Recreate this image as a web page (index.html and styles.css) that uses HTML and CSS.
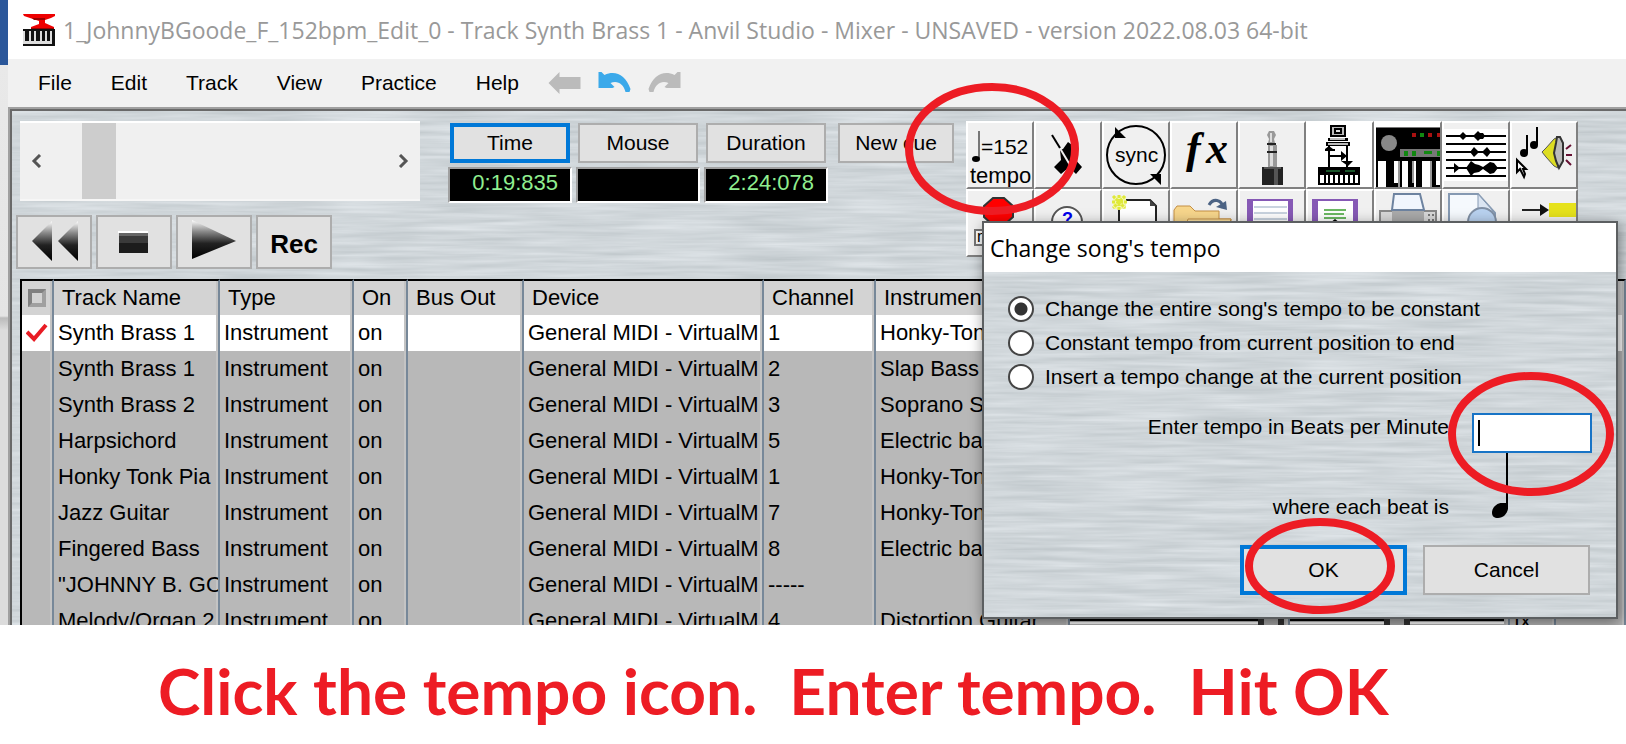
FILE: index.html
```html
<!DOCTYPE html>
<html lang="en">

<head>
    <meta charset="UTF-8">
    <meta name="viewport" content="width=device-width, initial-scale=1.0">
    <title>Anvil Studio - Change tempo</title>
    <link rel="stylesheet" href="styles.css">
</head>

<body>
    <main class="stage">
        <div class="window">
            <header class="title-bar">
                <svg class="app-icon" viewBox="0 0 32 32" aria-hidden="true">
                    <path fill="#e00" d="M0 0h32v2l-4 2-6 2v3l9 4v3H8v-3l8-3V7l-6-2-9-3z" />
                    <path fill="#900" d="M9 4h13v2H11zM8 14h23v2H8z" />
                    <path fill="#ddd" d="M0 16h32v14H0z" />
                    <path fill="#111" d="M0 15h32v2H0zM2 16h4v11H2zM8 16h3v11H8zM13 16h4v11h-4zM19 16h3v11h-3zM24 16h3v11h-3zM29 15h3v17h-3zM0 30h32v2H0z" />
                </svg>
                <span>1_JohnnyBGoode_F_152bpm_Edit_0 - Track Synth Brass 1 - Anvil Studio - Mixer - UNSAVED - version 2022.08.03 64-bit</span>
            </header>

            <nav class="menu">
                <button>File</button>
                <button>Edit</button>
                <button>Track</button>
                <button>View</button>
                <button>Practice</button>
                <div class="history">
                    <button>Help</button>
                    <button class="back" aria-label="Back">
                        <svg viewBox="0 0 32 24"><path fill="#bbb" d="M0 12 11 1v5h21v12H11v5z" /></svg>
                    </button>
                    <button aria-label="Undo">
                        <svg viewBox="0 0 32 24"><path fill="#3ba9ea" d="M0 1h3l3 3c11-5 21 0 26 14l-1 3h-4c-2-8-8-12-15-9l4 4-2 1H0z" /></svg>
                    </button>
                    <button aria-label="Redo">
                        <svg viewBox="0 0 32 24"><path fill="#bbb" d="M32 1h-3l-3 3C15-1 5 4 0 18l1 3h4c2-8 8-12 15-9l-4 4 2 1h14z" /></svg>
                    </button>
                </div>
            </nav>

            <div class="workspace metal">
                <div class="controls">
                    <div class="playback">
                        <div class="scrollbar">
                            <button aria-label="Scroll left"><svg viewBox="0 0 12 14"><path d="M10 1 4 7l6 6" /></svg></button>
                            <div class="scroll-track"><div class="thumb"></div></div>
                            <button aria-label="Scroll right"><svg viewBox="0 0 12 14"><path d="m2 1 6 6-6 6" /></svg></button>
                        </div>
                        <div class="transport">
                            <button aria-label="Rewind">
                                <svg viewBox="0 0 72 50">
                                    <defs>
                                        <linearGradient id="shade" x1="0" y1="0" x2="0" y2="1">
                                            <stop offset="0" stop-color="#fff" />
                                            <stop offset=".3" stop-color="#888" />
                                            <stop offset=".6" stop-color="#222" />
                                            <stop offset="1" stop-color="#000" />
                                        </linearGradient>
                                    </defs>
                                    <path fill="url(#shade)" d="M14 24 34 4v40zM40 24 60 4v40z" />
                                </svg>
                            </button>
                            <button aria-label="Stop">
                                <svg viewBox="0 0 72 50">
                                    <path fill="#fff" d="M20 14h30v2H20z" />
                                    <path fill="#666" d="M21 16h29v3H21z" />
                                    <path fill="#3a3a3a" d="M21 19h29v7H21z" />
                                    <path fill="#1c1c1c" d="M21 26h29v10H21z" />
                                </svg>
                            </button>
                            <button aria-label="Play">
                                <svg viewBox="0 0 72 50"><path fill="url(#shade)" d="M14 3 58 24 14 42z" /></svg>
                            </button>
                            <button class="rec">Rec</button>
                        </div>
                    </div>

                    <div class="readouts">
                        <div class="readout">
                            <button class="focused">Time</button>
                            <output>0:19:835</output>
                        </div>
                        <div class="readout">
                            <button>Mouse</button>
                            <output></output>
                        </div>
                        <div class="readout">
                            <button>Duration</button>
                            <output>2:24:078</output>
                        </div>
                    </div>
                    <button class="cue">New cue</button>

                    <div class="toolbar">
                        <button class="tempo-button">
                            <svg viewBox="0 0 64 64">
                                <path stroke="#777" stroke-width="2" d="M11 8v27" />
                                <ellipse cx="8" cy="36" rx="4" ry="3" />
                                <text x="13" y="31" font-size="21">=152</text>
                                <text x="2" y="60" font-size="22">tempo</text>
                            </svg>
                            <svg class="ring ring-tempo" viewBox="0 0 176 134"><ellipse cx="88" cy="67" rx="83" ry="62" /></svg>
                        </button>
                        <button aria-label="Metronome">
                            <svg viewBox="0 0 64 64">
                                <path d="m24 27 3-1 5-7 4 3 1 12 9 10-6 7-5-5h-4l-6 5-7-7 7-7z" />
                                <path stroke="#eee" stroke-width="2" d="m22 22 12 20" />
                                <path stroke="#000" stroke-width="2" d="m16 12 8 13" />
                            </svg>
                        </button>
                        <button aria-label="Sync">
                            <svg viewBox="0 0 64 64">
                                <circle cx="32" cy="32" r="29" fill="none" stroke="#000" stroke-width="2" />
                                <path d="M11 4v11h11zM46 51h11v11z" />
                                <text x="11" y="39" font-size="21">sync</text>
                            </svg>
                        </button>
                        <button aria-label="Effects">
                            <svg viewBox="0 0 64 64">
                                <text class="fx" x="14" y="40" font-size="44"><tspan>f</tspan><tspan x="34">x</tspan></text>
                            </svg>
                        </button>
                        <button aria-label="Audio input">
                            <svg viewBox="0 0 64 64">
                                <path fill="#999" d="M29 8h5l2 4-2 4 1 4h-7l1-4-2-4zM28 22h9v22h-9z" />
                                <path fill="#ddd" d="M30 10h2v9h-2zM30 23h3v20h-3z" />
                                <path fill="#222" d="M27 20h9v2h-9zM27 28h10v2H27zM22 44h21v18H22z" />
                                <path fill="#555" d="M34 46h4v16h-4zM24 44h17v2H24z" />
                            </svg>
                        </button>
                        <button class="plain" aria-label="MIDI devices">
                            <svg viewBox="0 0 64 64">
                                <path d="M22 2h16v12H22zM20 15h20v3H20zM18 19h24v4H18z" />
                                <path fill="#bbb" d="M24 4h12v8H24zM22 15h15v2H22zM20 20h20v2H20z" />
                                <path d="M26 5h8v6h-8z" />
                                <path fill="#ddd" d="M28 7h4v2h-4z" />
                                <path fill="none" stroke="#000" stroke-width="2" d="M21 23v21M39 23v21M21 33h15M17 27h10" />
                                <path d="m33 28 6 5-6 5zM33 38h12l-5 5zM17 26l4-3 4 3-4 3zM10 44h42v18H10z" />
                                <path fill="#fff" d="M12 52h4v8h-4zM18 52h2v8h-2zM22 52h3v8h-3zM27 52h3v8h-3zM32 52h3v8h-3zM37 52h3v8h-3zM42 52h3v8h-3zM47 52h3v8h-3z" />
                                <path stroke="#3a5" stroke-width="1" d="M18 48h14M37 48h10" />
                            </svg>
                        </button>
                        <button aria-label="Synthesizer">
                            <svg viewBox="0 0 64 64">
                                <path fill="#fff" d="M0 0h64v4H0z" />
                                <path d="M0 4h64v60H0z" />
                                <path fill="#777" d="M0 4h64v1H0zM24 26h40v8H24z" />
                                <circle cx="13" cy="20" r="8" fill="#888" />
                                <path fill="#a11" d="M36 10h4v4h-4zM52 10h4v4h-4zM61 10h3v4h-3z" />
                                <path fill="#181" d="M44 10h4v4h-4zM28 28h4v5h-4zM36 28h4v5h-4zM48 28h8v3h-8zM61 28h3v5h-3z" />
                                <path fill="#fff" d="M2 38h8v26H2zM18 38h4v22h-4zM26 38h6v26h-6zM38 38h2v26h-2zM46 38h8v26h-8zM60 38h4v24h-4z" />
                                <path fill="#999" d="M22 38h2v26h-2zM36 38h2v22h-2zM54 38h2v26h-2z" />
                            </svg>
                        </button>
                        <button aria-label="Audio tracks">
                            <svg viewBox="0 0 64 64">
                                <path fill="#fff" d="M0 6h64v52H0z" />
                                <path stroke="#000" stroke-width="2" d="M2 13h60M2 21h60M2 29h60M2 37h60M2 45h60M2 53h60" />
                                <path d="m15 13 4-4 4 4-4 4zM29 13l5-5 2 2h3l2 3-2 3h-3l-2 2zM26 29l4-5 5 5-5 5zM38 29l5-5 4 5-4 5zM10 40l6 5-6 5zM22 45l5-7 4 3 4 1 4 2 7-5 4 1 4 5-4 5-4 1-7-5-4 3-5 1-3 3z" />
                            </svg>
                        </button>
                        <button aria-label="Play notes">
                            <svg viewBox="0 0 64 64">
                                <ellipse cx="12" cy="30" rx="4" ry="4" />
                                <ellipse cx="22" cy="22" rx="4" ry="4" />
                                <path fill="none" stroke="#000" stroke-width="2" d="M15 12v18M25 4v18" />
                                <path fill="#fff" stroke="#000" stroke-width="2" d="M5 37v12l3-3 4 8 1-3-2-5h3z" />
                                <path fill="#dd2" stroke="#555" stroke-width="1" d="m30 29 4-4 8-9 4-2-3 15 3 16-4-2-8-9z" />
                                <path fill="#bbb" stroke="#333" stroke-width="2" d="M45 14h3l3 6v18l-4 7-3-7-2-8 2-10z" />
                                <path stroke="#613" stroke-width="2" d="m54 26 5-4M54 32h6M54 37l5 5" />
                            </svg>
                        </button>

                        <button aria-label="Stop all">
                            <svg viewBox="0 0 64 64">
                                <path fill="#f00" stroke="#333" stroke-width="2" d="M25 7h11l9 8v11l-9 8H25l-9-8V15z" />
                                <path fill="#fff" stroke="#777" stroke-width="2" d="M7 39h50v15H7z" />
                                <text x="9" y="51" font-size="16">m</text>
                            </svg>
                        </button>
                        <button aria-label="Help">
                            <svg viewBox="0 0 64 64">
                                <circle cx="31" cy="31" r="15" fill="#fff" stroke="#555" stroke-width="2" />
                                <text class="question" x="26" y="34" font-size="18">?</text>
                            </svg>
                        </button>
                        <button aria-label="New song">
                            <svg viewBox="0 0 64 64">
                                <path fill="#fff" stroke="#222" stroke-width="2" d="M16 9h30l6 6v41H15V9z" />
                                <path fill="#444" d="M46 9v6h6z" />
                                <path fill="#f4f6b0" d="M9 5h13v13H9z" />
                                <path stroke="#dfe93a" stroke-width="3" stroke-dasharray="3 1" d="M15 4v15M8 11h15M9 5l12 12M21 5 9 17" />
                            </svg>
                        </button>
                        <button aria-label="Open song">
                            <svg viewBox="0 0 64 64">
                                <path fill="#f7d68c" stroke="#c48f45" stroke-width="1" d="M2 54V19l3-4h13l5 5h24v8h12v26z" />
                                <path fill="#fbe0a0" stroke="#c48f45" stroke-width="1" d="M8 54l8-26h43l-8 26z" />
                                <path fill="none" stroke="#4c6384" stroke-width="3" d="M37 14c4-7 13-6 14 3" />
                                <path fill="#4c6384" d="m44 16 11 3-1-9z" />
                            </svg>
                        </button>
                        <button aria-label="Save">
                            <svg viewBox="0 0 64 64">
                                <path fill="#8659b5" d="M7 8h46v48H7z" />
                                <path fill="#fff" d="M13 10h35v34H13z" />
                                <path stroke="#c9d3df" stroke-width="2" d="M14 16h33M14 22h33M14 28h33" />
                            </svg>
                        </button>
                        <button aria-label="Save as">
                            <svg viewBox="0 0 64 64">
                                <path fill="#8659b5" d="M4 8h46v48H4z" />
                                <path fill="#fff" d="M10 10h35v34H10z" />
                                <path stroke="#6cb863" stroke-width="2" d="M16 19h22M16 23h20M16 27h22" />
                                <path d="m22 32 5-4 5 4z" />
                            </svg>
                        </button>
                        <button aria-label="Print">
                            <svg viewBox="0 0 64 64">
                                <path fill="#d8d8d8" stroke="#888" stroke-width="2" d="M4 20h56v32H4z" />
                                <path fill="#f1f6fd" stroke="#6d83a0" stroke-width="2" d="M18 3h26l4 16H16z" />
                                <path fill="#aaa" d="M16 20h32v20H16z" />
                                <path stroke="#777" stroke-width="2" stroke-dasharray="2 2" d="M52 24h8M52 29h8" />
                            </svg>
                        </button>
                        <button aria-label="Print preview">
                            <svg viewBox="0 0 64 64">
                                <path fill="#f5f9fd" stroke="#8599b2" stroke-width="2" d="M5 3h29l17 19v34H5z" />
                                <path fill="#dbe5f2" stroke="#8599b2" stroke-width="1" d="M34 3v17h15z" />
                                <circle cx="38" cy="31" r="14" fill="#b9d2f0" stroke="#8090a5" stroke-width="2" />
                            </svg>
                        </button>
                        <button aria-label="Insert">
                            <svg viewBox="0 0 64 64">
                                <path fill="#e6e21b" d="M37 12h27v14H37z" />
                                <path stroke="#222" stroke-width="2" d="M10 19h20" />
                                <path fill="#111" d="m28 13 9 6-9 6z" />
                            </svg>
                        </button>
                    </div>
                </div>

                <table class="tracks">
                    <colgroup>
                        <col class="col-check">
                        <col class="col-name">
                        <col class="col-type">
                        <col class="col-on">
                        <col class="col-bus">
                        <col class="col-device">
                        <col class="col-channel">
                        <col class="col-instrument">
                        <col class="col-slider">
                        <col class="col-slider">
                        <col class="col-fx">
                        <col>
                    </colgroup>
                    <thead>
                        <tr>
                            <th><span class="select-all"></span></th>
                            <th>Track Name</th>
                            <th>Type</th>
                            <th>On</th>
                            <th>Bus Out</th>
                            <th>Device</th>
                            <th>Channel</th>
                            <th>Instrument</th>
                            <th></th>
                            <th></th>
                            <th></th>
                            <th></th>
                        </tr>
                    </thead>
                    <tbody>
                        <tr class="selected">
                            <td><svg class="tick" viewBox="0 0 22 20"><path d="m1 9 7 7L20 2" /></svg></td>
                            <td>Synth Brass 1</td><td>Instrument</td><td>on</td><td></td>
                            <td>General MIDI - VirtualM</td><td>1</td><td>Honky-Tonk</td>
                            <td></td><td></td><td></td><td></td>
                        </tr>
                        <tr>
                            <td></td><td>Synth Brass 1</td><td>Instrument</td><td>on</td><td></td>
                            <td>General MIDI - VirtualM</td><td>2</td><td>Slap Bass</td>
                            <td></td><td></td><td></td><td></td>
                        </tr>
                        <tr>
                            <td></td><td>Synth Brass 2</td><td>Instrument</td><td>on</td><td></td>
                            <td>General MIDI - VirtualM</td><td>3</td><td>Soprano Sax</td>
                            <td></td><td></td><td></td><td></td>
                        </tr>
                        <tr>
                            <td></td><td>Harpsichord</td><td>Instrument</td><td>on</td><td></td>
                            <td>General MIDI - VirtualM</td><td>5</td><td>Electric bass</td>
                            <td></td><td></td><td></td><td></td>
                        </tr>
                        <tr>
                            <td></td><td>Honky Tonk Pia</td><td>Instrument</td><td>on</td><td></td>
                            <td>General MIDI - VirtualM</td><td>1</td><td>Honky-Tonk</td>
                            <td></td><td></td><td></td><td></td>
                        </tr>
                        <tr>
                            <td></td><td>Jazz Guitar</td><td>Instrument</td><td>on</td><td></td>
                            <td>General MIDI - VirtualM</td><td>7</td><td>Honky-Tonk</td>
                            <td></td><td></td><td></td><td></td>
                        </tr>
                        <tr>
                            <td></td><td>Fingered Bass</td><td>Instrument</td><td>on</td><td></td>
                            <td>General MIDI - VirtualM</td><td>8</td><td>Electric bass</td>
                            <td></td><td></td><td></td><td></td>
                        </tr>
                        <tr>
                            <td></td><td>"JOHNNY B. GO</td><td>Instrument</td><td>on</td><td></td>
                            <td>General MIDI - VirtualM</td><td>-----</td><td></td>
                            <td></td><td></td><td></td><td></td>
                        </tr>
                        <tr>
                            <td></td><td>Melody/Organ 2</td><td>Instrument</td><td>on</td><td></td>
                            <td>General MIDI - VirtualM</td><td>4</td><td>Distortion Guitar</td>
                            <td>
                                <div class="slider"><span class="groove"></span><span class="knob"></span></div>
                            </td>
                            <td>
                                <div class="slider"><span class="groove"></span><span class="knob"></span><span class="groove"></span></div>
                            </td>
                            <td>fx</td><td></td>
                        </tr>
                    </tbody>
                </table>
            </div>
        </div>

        <form class="dialog">
            <h2>Change song's tempo</h2>
            <div class="dialog-body metal">
                <div class="options">
                    <label><input type="radio" name="mode" checked>Change the entire song's tempo to be constant</label>
                    <label><input type="radio" name="mode">Constant tempo from current position to end</label>
                    <label><input type="radio" name="mode">Insert a tempo change at the current position</label>
                </div>
                <div class="field">
                    <label for="bpm">Enter tempo in Beats per Minute</label>
                    <div class="bpm">
                        <input type="text" id="bpm">
                        <span class="caret"></span>
                        <svg class="ring ring-bpm" viewBox="0 0 168 126"><ellipse cx="84" cy="63" rx="79" ry="58" /></svg>
                    </div>
                </div>
                <div class="beat">
                    <span>where each beat is</span>
                    <svg class="note" viewBox="0 0 120 66">
                        <path fill="none" stroke="#000" stroke-width="2" d="M35 0v56" />
                        <path d="M20 60c0-6 5-10 10-10h6v6c-1 5-5 9-10 9-4 0-6-2-6-5z" />
                    </svg>
                </div>
                <div class="actions">
                    <button type="button" class="ok">OK
                        <svg class="ring ring-ok" viewBox="0 0 152 98"><ellipse cx="76" cy="49" rx="71" ry="44" /></svg>
                    </button>
                    <button type="button" class="cancel">Cancel</button>
                </div>
            </div>
        </form>
    </main>

    <p class="caption">
        <span>Click the tempo icon.</span>
        <span>Enter tempo.</span>
        <span>Hit OK</span>
    </p>
</body>

</html>
```

FILE: styles.css
```css
* {
    box-sizing: border-box;
}

body {
    font-family: "Liberation Sans", Arial, sans-serif;
    font-size: 22px;
    margin: 0;
    height: 100vh;
    display: flex;
    flex-direction: column;
    background-color: #fff;
    color: #000;
}

button {
    font: inherit;
    color: inherit;
    padding: 0;
    border: none;
    background: none;
    cursor: pointer;
}

svg {
    display: block;
}

.metal {
    background-color: #cdd4d8;
    background-image: url("data:image/svg+xml,%3Csvg xmlns='http://www.w3.org/2000/svg' width='512' height='256'%3E%3Cfilter id='n' x='0' y='0' width='1' height='1' color-interpolation-filters='sRGB'%3E%3CfeTurbulence type='fractalNoise' baseFrequency='0.01 0.2' numOctaves='3' seed='4' stitchTiles='stitch'/%3E%3CfeColorMatrix values='0.16 0 0 0 0.735 0.15 0 0 0 0.765 0.15 0 0 0 0.78 0 0 0 0 1'/%3E%3C/filter%3E%3Crect width='512' height='256' filter='url(%23n)'/%3E%3C/svg%3E");
}

/* main window */

.stage {
    flex: 1;
    min-height: 0;
    overflow: hidden;
    position: relative;
    padding-left: 8px;
    background: linear-gradient(#2b579a 65px, #e9e9e9 65px, #e4e4e4 316px, #bbb 318px, #dcdcdc 330px);
}

.window {
    background-color: #f1f1f1;
}

.title-bar {
    height: 59px;
    display: flex;
    align-items: center;
    gap: 8px;
    padding-left: 15px;
    background-color: #fff;
    color: #999;
    font-family: "Open Sans", "Noto Sans", sans-serif;
    font-size: 23px;
    white-space: nowrap;
}

.app-icon {
    width: 32px;
    height: 32px;
}

.menu {
    height: 48px;
    display: flex;
    align-items: center;
    gap: 39px;
    padding-left: 30px;
    font-size: 21px;
}

.history {
    display: flex;
    align-items: center;
    gap: 17px;
}

.history .back {
    margin-left: 12px;
}

.history svg {
    width: 33px;
    height: 24px;
}

.workspace {
    border-top: 2px solid #696969;
    border-left: 2px solid #696969;
    box-shadow: 0 0 0 2px #a0a0a0;
    margin: 2px 0 0 2px;
    padding: 10px 0 0 4px;
}

.controls {
    display: flex;
    align-items: flex-start;
    padding-bottom: 10px;
}

.scrollbar {
    width: 400px;
    height: 80px;
    margin: 0 0 14px 4px;
    display: flex;
    border-top: 2px solid #fff;
    border-bottom: 2px solid #f6f6f6;
    background-color: #f0f0f0;
}

.scrollbar button {
    width: 32px;
    display: flex;
    align-items: center;
    justify-content: center;
}

.scrollbar svg {
    width: 12px;
    height: 14px;
    fill: none;
    stroke: #555;
    stroke-width: 3;
}

.scroll-track {
    flex: 1;
    padding-left: 30px;
}

.thumb {
    width: 34px;
    height: 100%;
    background-color: #cdcdcd;
}

.transport {
    display: flex;
    gap: 4px;
}

.transport button {
    width: 76px;
    height: 54px;
    border: 2px solid #adadad;
    background-color: #e1e1e1;
}

.transport svg {
    width: 72px;
    height: 50px;
}

.transport .rec {
    padding-top: 4px;
    font-size: 26px;
    font-weight: bold;
}

.readouts {
    display: flex;
    gap: 4px;
    margin-left: 28px;
}

.readout {
    display: flex;
    flex-direction: column;
    gap: 4px;
    padding-top: 2px;
    width: 124px;
}

.readout button,
.cue {
    height: 40px;
    margin: 0 2px;
    border: 2px solid #adadad;
    background-color: #e1e1e1;
    font-size: 21px;
}

.readout .focused {
    border: 4px solid #0078d7;
}

.readout output {
    height: 36px;
    padding-right: 12px;
    border: 2px solid;
    border-color: #a0a0a0 #fff #fff #a0a0a0;
    background-color: #000;
    color: #90ee90;
    line-height: 28px;
    text-align: right;
}

.cue {
    width: 116px;
    margin: 2px 12px 0 10px;
}

/* icon toolbar */

.toolbar {
    display: grid;
    grid-template-columns: repeat(9, 68px);
}

.toolbar button {
    position: relative;
    width: 68px;
    height: 68px;
    border: 2px solid;
    border-color: #fff #808080 #808080 #fff;
    background-color: #f0f0f0;
}

.toolbar button > svg:first-child {
    width: 64px;
    height: 64px;
}

.toolbar .plain {
    background-color: #fff;
}

.toolbar .fx {
    font-family: "Liberation Serif", serif;
    font-style: italic;
    font-weight: bold;
}

.toolbar .question {
    fill: #00e;
    font-weight: bold;
}

/* track list */

.tracks {
    width: calc(100% - 4px);
    margin-left: 4px;
    table-layout: fixed;
    border-collapse: separate;
    border-spacing: 0;
    border-left: 2px solid #000;
    background-color: #b8b8b8;
}

.col-check { width: 32px; }
.col-name { width: 166px; }
.col-type { width: 134px; }
.col-on { width: 54px; }
.col-bus { width: 116px; }
.col-device { width: 240px; }
.col-channel { width: 112px; }
.col-instrument { width: 194px; }
.col-slider { width: 220px; }
.col-fx { width: 46px; }

.tracks th,
.tracks td {
    height: 36px;
    padding: 0 0 0 4px;
    border-right: 2px solid #778899;
    box-shadow: inset -2px 0 #c4c4c4;
    overflow: hidden;
    white-space: nowrap;
    text-align: left;
    font-weight: normal;
    line-height: 34px;
}

.tracks th {
    padding-left: 8px;
    border-top: 2px solid #000;
    background-color: #d3d3d3;
}

.tracks th:first-child,
.tracks td:first-child {
    padding-left: 4px;
}

.tracks .selected td {
    background-color: #fff;
}

.select-all {
    display: block;
    width: 18px;
    height: 18px;
    margin-left: 2px;
    border: 4px solid;
    border-color: #808080 #a0a0a0 #a0a0a0 #808080;
}

.tick {
    width: 22px;
    height: 20px;
    fill: none;
    stroke: #e81c24;
    stroke-width: 4;
}

.slider {
    display: flex;
    align-items: center;
    height: 34px;
    margin: 0 4px 0 -4px;
}

.groove {
    flex: 1;
    height: 5px;
    border-top: 2px solid #000;
    border-bottom: 2px solid #fff;
}

.knob {
    width: 26px;
    height: 30px;
    border: 6px solid #333;
    border-width: 0 6px;
    background-color: #aaa;
}

/* tempo dialog */

.dialog {
    position: absolute;
    top: 221px;
    right: 8px;
    width: 636px;
    border: 2px solid #5c5f61;
    box-shadow: 2px 4px 14px rgba(0, 0, 0, 0.45);
    font-size: 21px;
}

.dialog h2 {
    height: 49px;
    margin: 0;
    padding-left: 6px;
    background-color: #fff;
    font-family: "Open Sans", "Noto Sans", sans-serif;
    font-size: 23px;
    font-weight: normal;
    line-height: 50px;
}

.dialog-body {
    padding: 20px 24px 22px;
}

.options label {
    display: flex;
    align-items: center;
    gap: 11px;
    height: 34px;
}

.options input {
    appearance: none;
    width: 26px;
    height: 26px;
    margin: 0;
    border: 2px solid #444;
    border-radius: 50%;
    background-color: #fff;
}

.options input:checked {
    background: radial-gradient(circle, #333 6px, #fff 7px);
}

.field,
.beat {
    display: flex;
    justify-content: flex-end;
    gap: 23px;
}

.field {
    margin-top: 19px;
}

.field label {
    line-height: 28px;
}

.bpm {
    position: relative;
    width: 120px;
}

.bpm input {
    display: block;
    width: 100%;
    height: 40px;
    padding: 0 8px;
    border: 2px solid #1874c6;
    background-color: #fff;
    font: inherit;
}

.caret {
    position: absolute;
    left: 6px;
    top: 7px;
    width: 2px;
    height: 26px;
    background-color: #000;
}

.beat span {
    align-self: flex-end;
    line-height: 24px;
}

.note {
    width: 120px;
    height: 66px;
}

.actions {
    display: flex;
    justify-content: flex-end;
    gap: 16px;
    margin-top: 26px;
    padding-right: 2px;
}

.actions button {
    position: relative;
    width: 167px;
    height: 50px;
    border: 2px solid #adadad;
    background-color: #e1e1e1;
}

.actions .ok {
    border: 4px solid #0078d7;
}

/* hand drawn highlights */

.ring {
    position: absolute;
    overflow: visible;
    fill: none;
    stroke: #ed1c24;
    stroke-width: 8;
    pointer-events: none;
}

.ring-tempo {
    width: 176px;
    height: 134px;
    left: -64px;
    top: -41px;
    z-index: 1;
}

.ring-bpm {
    width: 168px;
    height: 126px;
    left: -25px;
    top: -42px;
}

.ring-ok {
    width: 152px;
    height: 98px;
    left: 0;
    top: -32px;
}

.caption {
    display: flex;
    gap: 32px;
    margin: 0;
    padding: 24px 0 11px 158px;
    color: #ed1c24;
    font-family: "Comic Sans MS", Lato, sans-serif;
    font-size: 64px;
    font-weight: bold;
    line-height: 84px;
    white-space: nowrap;
}
```
